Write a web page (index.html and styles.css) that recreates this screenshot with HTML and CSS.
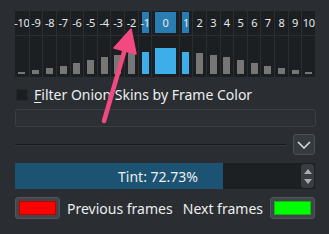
FILE: index.html
```html
<!DOCTYPE html>
<html lang="en">
<head>
    <meta charset="UTF-8">
    <title>Onion Skins</title>
    <link rel="stylesheet" href="styles.css">
</head>
<body>
    <div class="panel">
        <div class="frames" id="frames"></div>

        <label class="check-row">
            <span class="checkbox"></span>
            <span><u>F</u>ilter Onion Skins by Frame Color</span>
        </label>

        <div class="color-filter"></div>

        <div class="expander">
            <div class="sunken-line"></div>
            <button class="drop-btn">
                <svg width="14" height="8" viewBox="0 0 14 8">
                    <polyline points="1,1 7,7 13,1" fill="none" stroke="#dcdfe1" stroke-width="1.5"/>
                </svg>
            </button>
        </div>

        <div class="tint">
            <div class="tint-track">
                <div class="tint-fill" style="width: 72.73%;"></div>
                <span class="tint-text">Tint: 72.73%</span>
            </div>
            <div class="spin">
                <svg width="8" height="5" viewBox="0 0 8 5"><polygon points="0,5 4,0 8,5" fill="#a9adb1"/></svg>
                <svg width="8" height="5" viewBox="0 0 8 5"><polygon points="0,0 8,0 4,5" fill="#a9adb1"/></svg>
            </div>
        </div>

        <div class="swatch-row">
            <div class="swatch-group">
                <button class="swatch"><span class="swatch-color red"></span></button>
                <span>Previous frames</span>
            </div>
            <div class="swatch-group">
                <span>Next frames</span>
                <button class="swatch"><span class="swatch-color green"></span></button>
            </div>
        </div>
    </div>

    <svg class="pointer" width="329" height="234" viewBox="0 0 329 234">
        <line x1="104" y1="121" x2="125" y2="49" stroke="#f24a80" stroke-width="4.5" stroke-linecap="round"/>
        <polygon points="131,29 136,54 114,48" fill="#f24a80" stroke="#f24a80" stroke-width="1.5" stroke-linejoin="round"/>
    </svg>

    <script>
        // bar heights for frames -10 .. 10
        const heights = [2, 4, 6, 8, 11, 14, 17, 19, 21, 22, 26, 22, 21, 19, 17, 14, 11, 8, 6, 4, 2];

        document.addEventListener("DOMContentLoaded", () => {
            let frames = document.getElementById("frames");
            heights.forEach((h, i) => {
                let n = i - 10;
                let active = Math.abs(n) <= 1;

                let col = document.createElement("div");
                col.className = "col" + (n === 0 ? " current" : "");

                let lbl = document.createElement("div");
                lbl.className = "lbl";
                let num = document.createElement("span");
                num.className = "num" + (active ? " hl" : "");
                num.textContent = n;
                lbl.appendChild(num);

                let bars = document.createElement("div");
                bars.className = "bars";
                let bar = document.createElement("div");
                bar.className = "bar" + (active ? " on" : "");
                bar.style.height = h + "px";
                bars.appendChild(bar);

                col.appendChild(lbl);
                col.appendChild(bars);
                frames.appendChild(col);
            });
        });
    </script>
</body>
</html>
```

FILE: styles.css
```css
body {
    margin: 0;
    width: 329px;
    height: 234px;
    overflow: hidden;
    position: relative;
    background: #2a2e32;
    color: #eceeef;
    font-family: "Noto Sans", sans-serif;
    font-size: 14px;
}
.panel {
    padding: 11px 13px 0 15px;
}
.frames {
    width: 300px;
    height: 66px;
    display: grid;
    grid-template-columns: repeat(10, 1fr) 2fr repeat(10, 1fr);
    background: #1c1f22;
}
.col {
    display: flex;
    flex-direction: column;
    border-left: 1px solid #2a2e32;
    min-width: 0;
}
.col:first-child {
    border-left: none;
}
.lbl {
    height: 25px;
    box-sizing: border-box;
    padding-top: 1px;
    border-bottom: 1px solid #2a2e32;
    display: flex;
    justify-content: center;
}
.num {
    width: 7px;
    height: 21px;
    flex-shrink: 0;
    display: flex;
    align-items: center;
    justify-content: center;
    font-size: 11px;
    letter-spacing: -0.3px;
    white-space: nowrap;
    color: #e6e8ea;
}
.num.hl {
    background: #2a7db3;
}
.current .num {
    width: 21px;
}
.bars {
    flex: 1;
    display: flex;
    align-items: flex-end;
    justify-content: center;
    padding-bottom: 3px;
}
.bar {
    width: 7px;
    background: #767676;
}
.bar.on {
    background: #3daee9;
}
.current .bar {
    width: 21px;
}
.check-row {
    display: flex;
    align-items: center;
    gap: 6px;
    margin-top: 9px;
    height: 17px;
    padding-left: 1px;
}
.checkbox {
    width: 12px;
    height: 12px;
    background: #1b1e21;
    border: 1px solid #24282b;
    box-sizing: border-box;
    border-radius: 1px;
}
.check-row u {
    text-underline-offset: 2px;
}
.color-filter {
    margin-top: 6px;
    width: 301px;
    height: 18px;
    box-sizing: border-box;
    border: 1px solid #3a3f44;
    border-radius: 3px;
    background: #2c3035;
}
.expander {
    display: flex;
    align-items: center;
    gap: 7px;
    margin-top: 7px;
    width: 300px;
}
.sunken-line {
    flex: 1;
    height: 1px;
    background: #17191c;
    border-bottom: 1px solid #33383c;
}
.drop-btn {
    width: 22px;
    height: 21px;
    padding: 0;
    display: flex;
    align-items: center;
    justify-content: center;
    background: #353a3f;
    border: 1px solid #4a5055;
    border-radius: 3px;
}
.tint {
    margin-top: 8px;
    width: 300px;
    height: 26px;
    display: flex;
    background: #1d2023;
}
.tint-track {
    flex: 1;
    position: relative;
    display: flex;
    align-items: center;
    justify-content: center;
}
.tint-fill {
    position: absolute;
    left: 0;
    top: 0;
    bottom: 0;
    background: #1d5372;
}
.tint-text {
    position: relative;
}
.spin {
    width: 13px;
    margin: 1px 1px 1px 0;
    border-radius: 3px;
    background: #383d42;
    display: flex;
    flex-direction: column;
    align-items: center;
    justify-content: center;
    gap: 5px;
}
.swatch-row {
    margin-top: 8px;
    width: 300px;
    display: flex;
    justify-content: space-between;
    align-items: center;
}
.swatch-group {
    display: flex;
    align-items: center;
    gap: 7px;
}
.swatch {
    width: 45px;
    height: 22px;
    padding: 3px;
    box-sizing: border-box;
    display: flex;
    background: #40464b;
    border: 1px solid #51575c;
    border-radius: 3px;
}
.swatch-color {
    flex: 1;
    border: 1px solid rgba(0, 0, 0, 0.25);
}
.swatch-color.red {
    background: #ff0000;
}
.swatch-color.green {
    background: #00ff00;
}
.pointer {
    position: absolute;
    left: 0;
    top: 0;
    pointer-events: none;
}
```
